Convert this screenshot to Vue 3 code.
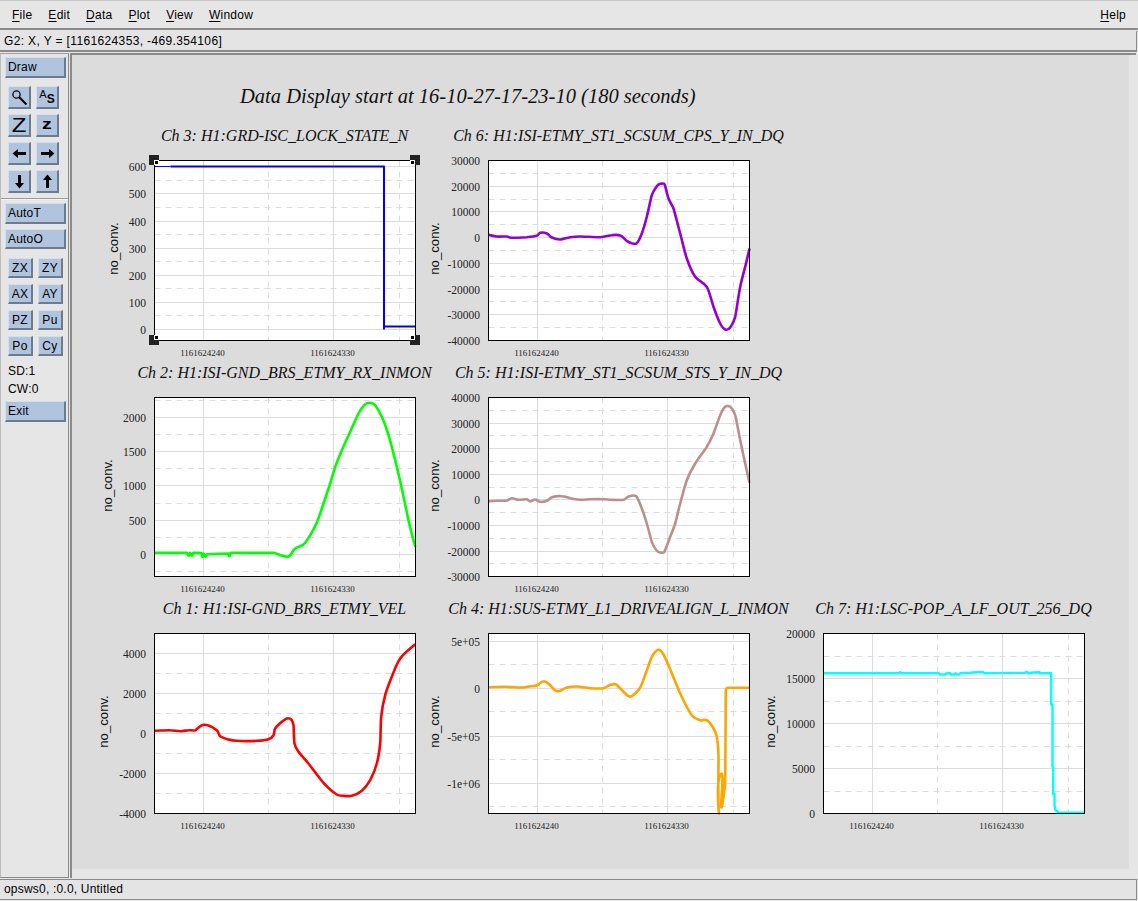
<template>
  <div class="app">
    <header class="menubar">
      <nav class="menus">
        <span v-for="m in menus" :key="m" class="menu"><u>{{ m[0] }}</u>{{ m.slice(1) }}</span>
      </nav>
      <span class="menu"><u>H</u>elp</span>
    </header>

    <div class="readout">G2: X, Y = [1161624353, -469.354106]</div>

    <div class="middle">
      <aside class="panel">
        <button class="btn wide">Draw</button>

        <div class="icons">
          <button class="btn icon" title="Zoom">
            <svg width="17" height="17" viewBox="0 0 17 17">
              <circle cx="5.5" cy="5.5" r="3.6" fill="#b0c4de" stroke="#000" stroke-width="1.3" />
              <path d="M8 8l7.5 7.5" stroke="#000" stroke-width="2" />
            </svg>
          </button>
          <button class="btn icon as"><span class="as-a">A</span><span class="as-s">S</span></button>
          <button class="btn icon"><span class="big-z">Z</span></button>
          <button class="btn icon"><span class="small-z">z</span></button>
          <button class="btn icon" title="Left">
            <svg width="15" height="11" viewBox="0 0 15 11"><path d="M0.5 5.5L6 1v3h8v3H6v3z" /></svg>
          </button>
          <button class="btn icon" title="Right">
            <svg width="15" height="11" viewBox="0 0 15 11"><path d="M14.5 5.5L9 1v3H1v3h8v3z" /></svg>
          </button>
          <button class="btn icon" title="Down">
            <svg width="11" height="15" viewBox="0 0 11 15"><path d="M5.5 14.5L1 9h3V1h3v8h3z" /></svg>
          </button>
          <button class="btn icon" title="Up">
            <svg width="11" height="15" viewBox="0 0 11 15"><path d="M5.5 0.5L1 6h3v8h3V6h3z" /></svg>
          </button>
        </div>

        <hr class="groove" />

        <button class="btn wide">AutoT</button>
        <button class="btn wide auto-o">AutoO</button>

        <div class="small-grid">
          <button v-for="b in smallButtons" :key="b" class="btn small">{{ b }}</button>
        </div>

        <div class="info">SD:1</div>
        <div class="info">CW:0</div>

        <button class="btn wide exit">Exit</button>
      </aside>

      <main class="canvas">
        <h1 class="main-title">Data Display start at 16-10-27-17-23-10 (180 seconds)</h1>

        <div class="plots">
          <svg
            v-for="p in plots"
            :key="p.title"
            class="plot"
            :style="{ gridRow: p.row, gridColumn: p.col }"
            width="335"
            height="236"
            viewBox="-60.5 -40.5 335 236"
          >
            <text class="plot-title" x="130" y="-20">{{ p.title }}</text>

            <rect x="0" y="0" width="261" :height="p.h" fill="#fff" />

            <line
              v-for="g in p.dashed"
              :key="'d' + g"
              x1="0"
              x2="261"
              :y1="g"
              :y2="g"
              class="grid dashed"
            />
            <line
              v-for="t in p.ticks"
              :key="'s' + t.label"
              x1="0"
              x2="261"
              :y1="t.y"
              :y2="t.y"
              class="grid"
            />
            <line x1="114" x2="114" y1="0" :y2="p.h" class="grid dashed" />
            <line x1="245" x2="245" y1="0" :y2="p.h" class="grid dashed" />
            <line x1="49" x2="49" y1="0" :y2="p.h" class="grid" />
            <line x1="179" x2="179" y1="0" :y2="p.h" class="grid" />

            <path v-if="p.thin" :d="p.thin" fill="none" :stroke="p.color" stroke-width="1" />
            <path :d="p.path" fill="none" :stroke="p.color" :stroke-width="p.weight" stroke-linejoin="round" />

            <rect x="0" y="0" width="261" :height="p.h" fill="none" stroke="#000" stroke-width="1" />

            <text
              v-for="t in p.ticks"
              :key="t.label"
              class="y-tick"
              x="-8.5"
              :y="t.y + 4"
            >{{ t.label }}</text>

            <text class="x-tick" x="48" :y="p.h + 15">1161624240</text>
            <text class="x-tick" x="178" :y="p.h + 15">1161624330</text>

            <text
              class="y-label"
              :transform="`translate(${p.labelX} 88) rotate(-90)`"
            >no_conv.</text>

            <g v-if="p.selected" transform="translate(-0.5 -0.5)">
              <g v-for="c in handles" :key="c.x + '-' + c.y">
                <rect :x="c.x - 5" :y="c.y - 5" width="10" height="10" fill="#222" />
                <rect :x="c.sx > 0 ? c.x : c.x - 5" :y="c.sy > 0 ? c.y : c.y - 5" width="5" height="5" fill="#fff" />
                <rect :x="c.sx > 0 ? c.x + 1 : c.x - 4" :y="c.sy > 0 ? c.y + 1 : c.y - 4" width="3" height="3" fill="#000" />
              </g>
            </g>
          </svg>
        </div>
      </main>
    </div>

    <footer class="status">opsws0, :0.0, Untitled</footer>
  </div>
</template>

<script setup>
const menus = ['File', 'Edit', 'Data', 'Plot', 'View', 'Window']
const smallButtons = ['ZX', 'ZY', 'AX', 'AY', 'PZ', 'Pu', 'Po', 'Cy']

const handles = [
  { x: 0, y: 0, sx: 1, sy: 1 },
  { x: 261, y: 0, sx: -1, sy: 1 },
  { x: 0, y: 180, sx: 1, sy: -1 },
  { x: 261, y: 180, sx: -1, sy: -1 },
]

// traces were read off 3x crops, so points are in crop pixels relative to the frame corner
function toLocal(ox, oy, pts) {
  const out = []
  for (let i = 0; i < pts.length; i += 2) out.push([(pts[i] - ox) / 3, (pts[i + 1] - oy) / 3])
  return out
}

function trace(ox, oy, pts) {
  return toLocal(ox, oy, pts)
    .map((p, i) => (i ? 'L' : 'M') + p[0].toFixed(1) + ' ' + p[1].toFixed(1))
    .join('')
}

// same points, but curved; handles are capped by the shorter neighbour so spikes stay sharp
function smooth(ox, oy, pts) {
  const p = toLocal(ox, oy, pts)
  const f = n => n.toFixed(1)
  const handle = i => {
    const a = p[Math.max(i - 1, 0)]
    const b = p[Math.min(i + 1, p.length - 1)]
    const dx = b[0] - a[0]
    const dy = b[1] - a[1]
    const len = Math.hypot(dx, dy) || 1
    const prev = i > 0 ? Math.hypot(p[i][0] - a[0], p[i][1] - a[1]) : Infinity
    const next = i < p.length - 1 ? Math.hypot(b[0] - p[i][0], b[1] - p[i][1]) : Infinity
    const r = Math.min(prev, next) / 3
    return [(dx / len) * r, (dy / len) * r]
  }
  let d = 'M' + f(p[0][0]) + ' ' + f(p[0][1])
  for (let i = 0; i < p.length - 1; i++) {
    const h0 = handle(i)
    const h1 = handle(i + 1)
    d += 'C' + f(p[i][0] + h0[0]) + ' ' + f(p[i][1] + h0[1]) + ' ' +
      f(p[i + 1][0] - h1[0]) + ' ' + f(p[i + 1][1] - h1[1]) + ' ' +
      f(p[i + 1][0]) + ' ' + f(p[i + 1][1])
  }
  return d
}

function ticks(labels, y0, step) {
  return labels.map((label, i) => ({ label, y: Math.round(y0 + step * i) }))
}

function dashes(y0, step, n) {
  const out = []
  for (let i = 0; i < n; i++) out.push(Math.round(y0 + step * i))
  return out
}

const plots = [
  {
    title: 'Ch 3: H1:GRD-ISC_LOCK_STATE_N',
    row: 1, col: 1, h: 180, labelX: -37, color: '#0000ff', weight: 2, selected: true,
    ticks: ticks(['600', '500', '400', '300', '200', '100', '0'], 6.3, 27.1),
    dashed: dashes(19.9, 27.1, 6),
    thin: 'M0 6H16',
    path: 'M16 6H229.5V169M229.5 166H261',
  },
  {
    title: 'Ch 6: H1:ISI-ETMY_ST1_SCSUM_CPS_Y_IN_DQ',
    row: 1, col: 2, h: 180, labelX: -50, color: '#9400d3', weight: 2.6,
    ticks: ticks(['30000', '20000', '10000', '0', '-10000', '-20000', '-30000', '-40000'], 0, 25.7),
    dashed: dashes(12.9, 25.7, 7),
    path: smooth(175, 121, [175,344,200,349,230,349,245,353,290,351,320,347,330,338,350,340,365,352,390,358,420,351,450,349,510,351,545,345,570,346,590,362,605,369,620,369,635,340,650,290,665,225,680,198,690,191,703,192,715,235,730,265,750,340,770,415,795,470,830,500,850,560,870,610,885,628,900,622,915,590,930,500,945,440,958,385]),
  },
  {
    title: 'Ch 2: H1:ISI-GND_BRS_ETMY_RX_INMON',
    row: 2, col: 1, h: 179, labelX: -43, color: '#00ff00', weight: 2.6,
    ticks: ticks(['2000', '1500', '1000', '500', '0'], 20, 34.2),
    dashed: dashes(3, 34.2, 6),
    path: smooth(193, 112, [193,578,290,578,295,587,300,578,305,587,310,578,335,580,337,590,340,580,345,590,350,582,415,580,418,588,422,578,550,578,570,585,590,590,600,585,615,565,640,553,660,525,680,487,700,430,720,370,735,320,755,270,780,215,805,160,825,132,840,128,855,135,875,170,895,225,915,300,935,385,955,480,975,560]),
  },
  {
    title: 'Ch 5: H1:ISI-ETMY_ST1_SCSUM_STS_Y_IN_DQ',
    row: 2, col: 2, h: 179, labelX: -50, color: '#bc8f8f', weight: 2.6,
    ticks: ticks(['40000', '30000', '20000', '10000', '0', '-10000', '-20000', '-30000'], 0, 25.6),
    dashed: dashes(12.8, 25.6, 7),
    path: smooth(175, 112, [175,423,200,422,230,421,245,414,265,419,290,417,300,424,315,418,330,425,350,422,365,411,395,408,420,414,450,419,480,417,520,417,545,419,580,419,595,409,618,408,635,445,650,490,665,545,680,572,690,577,702,576,720,530,735,490,750,430,770,360,795,310,830,260,850,220,870,165,885,140,900,140,915,165,930,240,945,310,958,368]),
  },
  {
    title: 'Ch 1: H1:ISI-GND_BRS_ETMY_VEL',
    row: 3, col: 1, h: 180, labelX: -47, color: '#ff0000', weight: 2.6,
    ticks: ticks(['4000', '2000', '0', '-2000', '-4000'], 20, 40),
    dashed: dashes(40, 40, 4),
    path: smooth(193, 100, [193,392,240,390,270,393,295,390,315,390,335,375,355,376,380,390,390,408,415,418,440,422,500,422,535,417,550,405,555,385,575,365,590,355,603,358,610,375,613,430,625,455,655,490,700,548,740,583,760,587,785,587,815,572,840,540,860,490,870,430,873,350,885,285,905,230,930,175,975,132]),
  },
  {
    title: 'Ch 4: H1:SUS-ETMY_L1_DRIVEALIGN_L_INMON',
    row: 3, col: 2, h: 180, labelX: -50, color: '#ffa500', weight: 2.6,
    ticks: ticks(['5e+05', '0', '-5e+05', '-1e+06'], 8, 47.4),
    dashed: dashes(31, 47.4, 4),
    path: smooth(175, 100, [175,261,225,260,280,262,300,258,320,256,340,243,360,255,375,271,390,272,410,262,440,259,480,264,520,264,540,254,558,253,580,275,595,288,605,288,630,262,650,210,665,170,682,150,695,155,715,195,750,280,785,345,810,360,830,360,850,385,860,410,865,470,866,634,870,525,873,620,880,590,885,540,887,270,895,263,958,263]),
  },
  {
    title: 'Ch 7: H1:LSC-POP_A_LF_OUT_256_DQ',
    row: 3, col: 3, h: 180, labelX: -48.5, color: '#00ffff', weight: 2.4,
    ticks: ticks(['20000', '15000', '10000', '5000', '0'], 0, 45),
    dashed: dashes(22.5, 45, 4),
    path: trace(190, 130, [190,249,415,249,420,246,425,249,535,249,540,253,555,253,560,249,570,249,572,253,582,253,585,249,590,253,597,253,600,249,630,248,650,246,670,246,672,249,795,248,800,245,805,249,820,247,838,246,840,249,873,249,873,343,877,343,877,530,879,530,879,612,883,612,883,645,886,660,895,667,973,668]),
  },
]
</script>

<style>
html, body { margin: 0; background: #e6e6e6; }
</style>

<style scoped>
.app {
  width: 1138px;
  height: 901px;
  display: flex;
  flex-direction: column;
  background: #e6e6e6;
  color: #000;
  font-family: "Liberation Sans", Arial, sans-serif;
  font-size: 12px;
  overflow: hidden;
}

.menubar {
  height: 30px;
  flex: none;
  display: flex;
  justify-content: space-between;
  align-items: center;
  padding: 2px 12px 0;
  box-sizing: border-box;
  border-bottom: 2px solid #8a8a8a;
  box-shadow: inset 0 1px 0 #c8c8c8;
}
.menus { display: flex; gap: 16px; }
.menu { letter-spacing: 0.25px; }
.menu u { text-underline-offset: 2px; }

.readout {
  height: 21px;
  flex: none;
  box-sizing: border-box;
  margin: 1px 1px 0 0;
  padding: 1px 0 0 4px;
  line-height: 18px;
  letter-spacing: 0.36px;
  border-bottom: 2px solid #8a8a8a;
  border-right: 1px solid #8a8a8a;
  background: #e4e4e4;
}

.middle {
  flex: 1;
  min-height: 0;
  display: flex;
  padding-top: 1px;
}

.panel {
  width: 69px;
  flex: none;
  box-sizing: border-box;
  padding: 3px 2px 0 4px;
  display: flex;
  flex-direction: column;
  align-items: flex-start;
  border-right: 1px solid #8a8a8a;
  border-top: 1px solid #a0a0a0;
  border-bottom: 1px solid #8a8a8a;
  border-left: 1px solid #bdbdbd;
}

.btn {
  box-sizing: border-box;
  margin: 0;
  padding: 0;
  background: #b0c4de;
  color: #000;
  border-style: solid;
  border-width: 1px 2px 2px 1px;
  border-color: #d4deec #6c7c90 #6c7c90 #d4deec;
  font-family: inherit;
  font-size: 12px;
  letter-spacing: 0.2px;
}

.wide {
  width: 61px;
  height: 21px;
  text-align: left;
  padding-left: 2px;
  flex: none;
}
.auto-o { margin-top: 5px; height: 20px; }

.icons {
  display: grid;
  grid-template-columns: 23px 23px;
  grid-auto-rows: 23px;
  gap: 5px;
  margin: 8px 0 0 3px;
}
.icon {
  display: flex;
  align-items: center;
  justify-content: center;
}
.icon svg { display: block; }
.big-z {
  display: inline-block;
  font-size: 20px;
  line-height: 1;
  letter-spacing: 0;
  transform: scaleX(1.2);
}
.small-z {
  display: inline-block;
  font-size: 15px;
  font-weight: 700;
  line-height: 1;
  letter-spacing: 0;
  padding-bottom: 3px;
  transform: scaleX(1.3);
}
.as { font-size: 11px; line-height: 1; letter-spacing: 0; padding-bottom: 2px; }
.as-a { margin-top: -3px; margin-right: 0; }
.as-s { font-weight: 700; font-size: 12px; margin-top: 5px; }

.groove {
  align-self: stretch;
  height: 0;
  margin: 5px -2px 3px -4px;
  border: 0;
  border-top: 1px solid #9a9a9a;
  border-bottom: 1px solid #f4f4f4;
}

.small-grid {
  display: grid;
  grid-template-columns: 25px 25px;
  grid-auto-rows: 20px;
  column-gap: 5px;
  row-gap: 6px;
  margin: 9px 0 0 3px;
}
.small { font-size: 12px; letter-spacing: 0.3px; }

.info {
  margin: 9px 0 0 3px;
  height: 13px;
  line-height: 13px;
  letter-spacing: 0.2px;
}
.info + .info { margin-top: 5px; }
.exit { margin-top: 5px; }

.canvas {
  flex: 1;
  min-width: 0;
  margin: 0 2px 0 1px;
  border-top: 2px solid #8a8a8a;
  border-left: 2px solid #8a8a8a;
  box-sizing: border-box;
  background: #e6e6e6;
  display: flex;
  flex-direction: column;
}

.main-title {
  margin: 0 7px 0 0;
  padding: 28px 0 0 168px;
  height: 65px;
  box-sizing: border-box;
  font: italic 400 20.5px "Liberation Serif", "Times New Roman", serif;
  line-height: 26px;
  color: #111;
  background: #dcdcdc;
  white-space: nowrap;
}

.plots {
  flex: none;
  margin: 0 7px 9px 0;
  padding-left: 22px;
  height: 749px;
  box-sizing: border-box;
  background: #dcdcdc;
  display: grid;
  grid-template-columns: 334px 335px 335px;
  grid-template-rows: 237px 236px 236px;
  align-content: start;
}

.plot { display: block; overflow: visible; }

.plot-title {
  font: italic 400 16px "Liberation Serif", "Times New Roman", serif;
  text-anchor: middle;
  fill: #111;
}
.grid { stroke: #dcdcdc; stroke-width: 1; }
.dashed { stroke-dasharray: 6 5; }
.y-tick {
  font: 400 11.5px "Liberation Serif", "Times New Roman", serif;
  text-anchor: end;
  fill: #222;
}
.x-tick {
  font: 400 9px "Liberation Serif", "Times New Roman", serif;
  text-anchor: middle;
  fill: #222;
}
.y-label {
  font: 400 13.2px "Liberation Sans", Arial, sans-serif;
  text-anchor: middle;
  fill: #111;
}

.status {
  height: 21px;
  flex: none;
  box-sizing: border-box;
  margin: 1px 1px 1px 0;
  padding-left: 4px;
  line-height: 19px;
  letter-spacing: 0.2px;
  border: 1px solid #8a8a8a;
  border-left: 0;
  background: #e4e4e4;
}
</style>
